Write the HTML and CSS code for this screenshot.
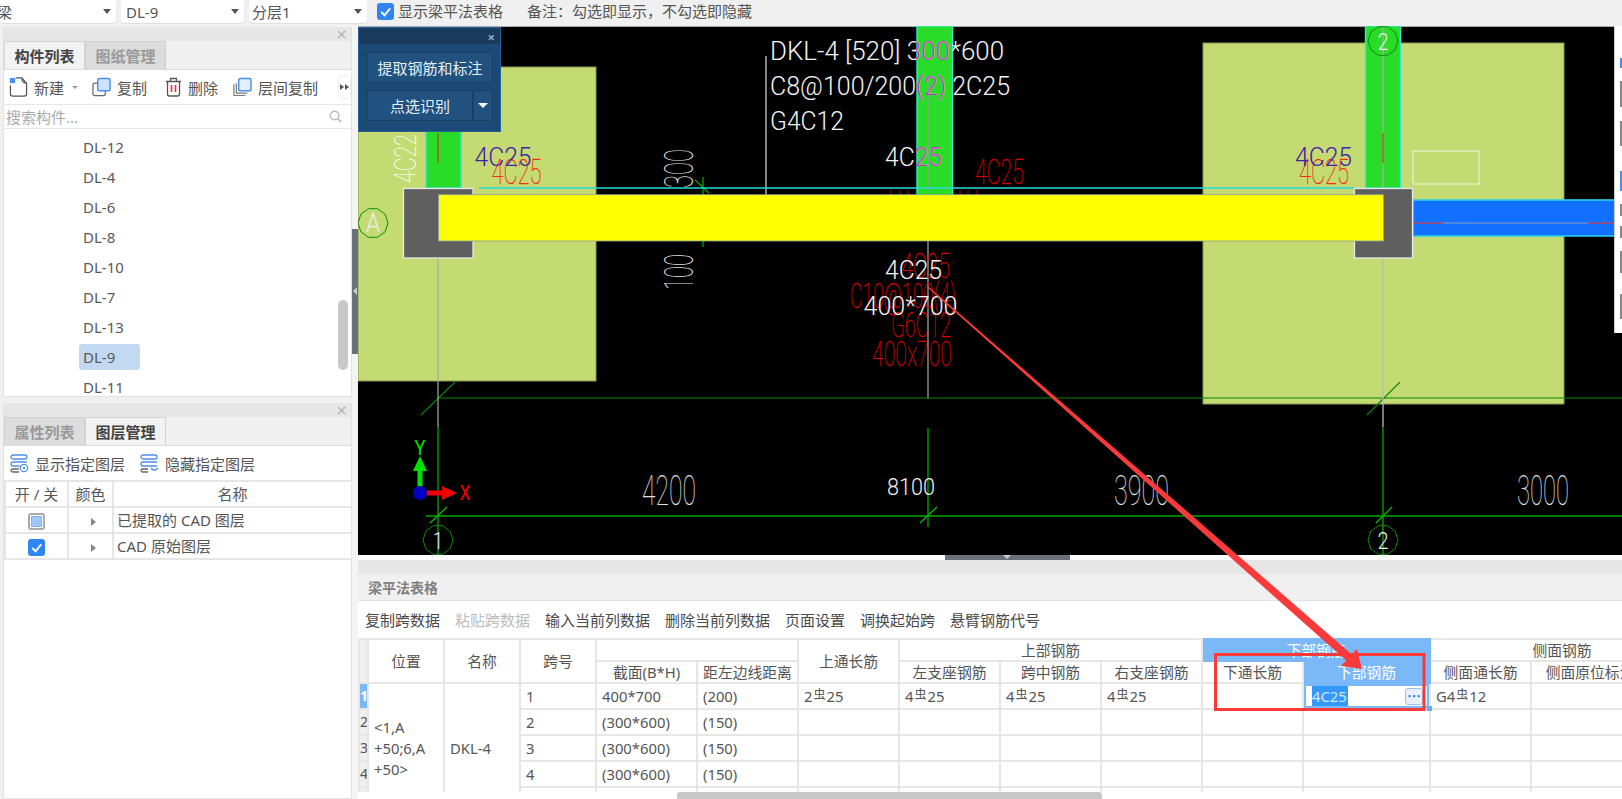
FILE: index.html
```html
<!DOCTYPE html>
<html lang="zh">
<head>
<meta charset="utf-8">
<title>梁平法表格</title>
<link rel="stylesheet" href="styles.css">
</head>
<body>
<header class="topbar">
  <div class="select s1"><span class="cut">梁</span><i class="caret"></i></div>
  <div class="select s2"><span>DL-9</span><i class="caret"></i></div>
  <div class="select s3"><span>分层1</span><i class="caret"></i></div>
  <span class="check on topcheck"><svg viewBox="0 0 16 16"><path d="M3.5 8.5 L7 12 L13 4.5" fill="none" stroke="#fff" stroke-width="2"/></svg></span>
  <span class="toplabel">显示梁平法表格</span>
  <span class="topnote">备注：勾选即显示，不勾选即隐藏</span>
</header>

<div class="main">
  <aside class="sidebar">
    <section class="panel p1">
      <div class="ptitle"><svg class="close" viewBox="0 0 10 10"><path d="M1 1 L9 9 M9 1 L1 9" stroke="#aaa" stroke-width="1.2"/></svg></div>
      <div class="tabs"><span class="tab active">构件列表</span><span class="tab">图纸管理</span></div>
      <div class="tools">
        <svg class="ic i-new" viewBox="0 0 20 21"><path d="M1.5 9 V17.5 Q1.5 20 4 20 H16 Q18.5 20 18.5 17.5 V6.5 L13.5 1 H7" fill="none" stroke="#555" stroke-width="1.3"/><path d="M13.5 1 Q13.5 6.5 18.5 6.5" fill="none" stroke="#555" stroke-width="1.2"/><rect x="1" y="1" width="5.5" height="5.5" fill="#4a90ec"/></svg>
        <span class="tl t-new">新建</span><i class="mini"></i>
        <svg class="ic i-copy" viewBox="0 0 20 20"><rect x="1" y="6" width="13" height="13" rx="2" fill="#fff" stroke="#666" stroke-width="1.3"/><rect x="6" y="1" width="13" height="13" rx="2" fill="#cfe2fb" stroke="#4a90e8" stroke-width="1.5"/></svg>
        <span class="tl t-copy">复制</span>
        <svg class="ic i-del" viewBox="0 0 17 20"><path d="M1 4.5 H16 M5.5 4.5 V1.5 H11.5 V4.5" fill="none" stroke="#555" stroke-width="1.3"/><path d="M2.5 4.5 V17 Q2.5 19 4.5 19 H12.5 Q14.5 19 14.5 17 V4.5" fill="none" stroke="#555" stroke-width="1.3"/><path d="M6.5 8 V15 M10.5 8 V15" stroke="#e03030" stroke-width="1.6"/></svg>
        <span class="tl t-del">删除</span>
        <svg class="ic i-floor" viewBox="0 0 20 20"><path d="M1 7 V19 H13 M3.5 6 V16.5 H15" fill="none" stroke="#777" stroke-width="1.2"/><rect x="6" y="1" width="13" height="13" rx="2" fill="#e3eefc" stroke="#4a90e8" stroke-width="1.5"/></svg>
        <span class="tl t-floor">层间复制</span>
        <span class="more"><i></i><i></i></span>
      </div>
      <div class="search"><span>搜索构件...</span><svg viewBox="0 0 14 14"><circle cx="6" cy="6" r="4.6" fill="none" stroke="#bbb" stroke-width="1.6"/><path d="M9.5 9.5 L13 13" stroke="#bbb" stroke-width="1.8"/></svg></div>
      <div class="listwrap">
        <ul class="list">
          <li><span>DL-12</span></li><li><span>DL-4</span></li><li><span>DL-6</span></li><li><span>DL-8</span></li><li><span>DL-10</span></li><li><span>DL-7</span></li><li><span>DL-13</span></li><li class="cur"><span>DL-9</span></li><li><span>DL-11</span></li>
        </ul>
        <div class="vscroll"></div>
      </div>
    </section>
    <section class="panel p2">
      <div class="ptitle"><svg class="close" viewBox="0 0 10 10"><path d="M1 1 L9 9 M9 1 L1 9" stroke="#aaa" stroke-width="1.2"/></svg></div>
      <div class="tabs"><span class="tab">属性列表</span><span class="tab active">图层管理</span></div>
      <div class="layerbar">
        <svg class="lic" viewBox="0 0 19 19"><rect x="1" y="1" width="16" height="4" rx="2" fill="none" stroke="#4a90e8" stroke-width="1.3"/><path d="M17 8 H3 Q1 8 1 10 Q1 12 3 12 H10" fill="none" stroke="#4a90e8" stroke-width="1.3"/><path d="M9 15 H3 Q1 15 1 16.5 Q1 18 3 18 H9" fill="none" stroke="#666" stroke-width="1.3"/><circle cx="14" cy="14" r="3.6" fill="none" stroke="#4a90e8" stroke-width="1.2"/><circle cx="14" cy="14" r="1.2" fill="#4a90e8"/></svg>
        <span class="ll">显示指定图层</span>
        <svg class="lic" viewBox="0 0 19 19"><rect x="1" y="1" width="16" height="4" rx="2" fill="none" stroke="#4a90e8" stroke-width="1.3"/><path d="M17 8 H3 Q1 8 1 10 Q1 12 3 12 H17" fill="none" stroke="#4a90e8" stroke-width="1.3"/><path d="M8 15 H3 Q1 15 1 16.5 Q1 18 3 18 H8" fill="none" stroke="#666" stroke-width="1.3"/><path d="M11 14 Q14 18 18 14" fill="none" stroke="#4a90e8" stroke-width="1.3"/></svg>
        <span class="ll">隐藏指定图层</span>
      </div>
      <table class="layers">
        <colgroup><col class="lc1"><col class="lc2"><col class="lc3"></colgroup>
        <tr><th>开 / 关</th><th>颜色</th><th>名称</th></tr>
        <tr><td class="mid"><span class="check part"><i></i></span></td><td class="arr"><i class="tri"></i></td><td>已提取的 CAD 图层</td></tr>
        <tr><td class="mid"><span class="check on"><svg viewBox="0 0 16 16"><path d="M3.5 8.5 L7 12 L13 4.5" fill="none" stroke="#fff" stroke-width="2"/></svg></span></td><td class="arr"><i class="tri"></i></td><td>CAD 原始图层</td></tr>
      </table>
    </section>
  </aside>
  <div class="splitter"><div class="handle"><i></i></div></div>

  <div class="work">
    <div class="canvas">
      <svg class="cad" viewBox="358 26 1264 529" width="1264" height="529">
        <defs>
          <clipPath id="gc"><rect x="916" y="26" width="36" height="170"/></clipPath>
          <polygon id="ring" points="15,0 12.1,8.8 4.6,14.3 -4.6,14.3 -12.1,8.8 -15,0 -12.1,-8.8 -4.6,-14.3 4.6,-14.3 12.1,-8.8" fill="none" stroke="#0c8c0c" stroke-width="1"/>
        </defs>
        <rect x="358" y="26" width="1264" height="529" fill="#000"/>
        <rect x="358" y="26" width="1264" height="1" fill="#aaa"/>
        <!-- columns -->
        <rect x="358" y="67" width="238" height="314" fill="#c3db72" stroke="#8a9a50"/>
        <rect x="1203" y="43" width="361" height="361" fill="#c3db72" stroke="#8a9a50"/>
        <!-- grid -->
        <path d="M438 398 H1622" stroke="#0a860a" stroke-width="1.2"/>
        <path d="M426 516 H1622" stroke="#00a800" stroke-width="1.4"/>
        <path d="M421 415 L455 382 M1367 415 L1400 382" stroke="#0a860a" stroke-width="1.1"/>
        <path d="M430 523 L447 507 M920 523 L937 507 M1376 523 L1392 507" stroke="#00c800" stroke-width="1.2"/>
        <path d="M438 427 V555 M928 428 V527 M1383 427 V555" stroke="#00a800" stroke-width="1.3"/>
        <path d="M438 258 V427 M928 241 V398" stroke="#aaa" stroke-width="1.2"/>
        <path d="M1383 258 V427" stroke="#bbb" stroke-width="1.3"/>
        <path d="M766 56 V195" stroke="#ccc" stroke-width="1.3"/>
        <path d="M703 177 V247 M695 180 L709 193" stroke="#00b000" stroke-width="1.2"/>
        <!-- green walls -->
        <rect x="426" y="128" width="35" height="60" fill="#28dc28" stroke="#30e8d8" stroke-width="1.4"/>
        <rect x="917" y="26" width="35.5" height="170" fill="#28dc28" stroke="#30e8d8" stroke-width="1.4"/>
        <rect x="1365.5" y="26" width="35" height="162" fill="#28dc28" stroke="#30e8d8" stroke-width="1.4"/>
        <path d="M928 75 V190" stroke="#999" stroke-width="1"/>
        <path d="M1383 26 V188" stroke="#aaa" stroke-width="1.2"/>
        <path d="M438 133 V163 M1383 133 V163" stroke="#c84018" stroke-width="1.2"/>
        <!-- beams -->
        <path d="M479 188 H1355" stroke="#28d8d8" stroke-width="1.3"/>
        <path d="M891 190 V195 M900 190 V195 M908 190 V195 M960 190 V195 M968 190 V195 M977 190 V195" stroke="#b00000" stroke-width="1"/>
        <rect x="1413" y="200" width="210" height="36" fill="#1170ff" stroke="#2cd0e8" stroke-width="1.6"/>
        <path d="M1413 223 H1622" stroke="#8a9ac0" stroke-width="1"/>
        <path d="M1413 223 H1443 M1588 223 H1622" stroke="#c02040" stroke-width="1.2"/>
        <rect x="403.5" y="188.5" width="69.5" height="69.5" fill="#5f5f5f" stroke="#e8e8e8" stroke-width="1.3"/>
        <rect x="1354.5" y="188.5" width="58" height="69.5" fill="#5f5f5f" stroke="#e8e8e8" stroke-width="1.3"/>
        <rect x="438.6" y="194.7" width="945" height="46.3" fill="#ff0" stroke="#8a9aa8" stroke-width=".8"/>
        <rect x="1413" y="151" width="66" height="33" fill="none" stroke="#e4eec0" stroke-width="1.4"/>
        <!-- dimension text -->
        <text class="thin w" x="642" y="505" font-size="42" textLength="54" lengthAdjust="spacingAndGlyphs">4200</text>
        <text class="thin w" x="1114" y="505" font-size="42" textLength="55" lengthAdjust="spacingAndGlyphs">3900</text>
        <text class="thin w" x="1517" y="505" font-size="42" textLength="52" lengthAdjust="spacingAndGlyphs">3000</text>
        <text class="lite wb" x="887" y="495" font-size="24" textLength="48" lengthAdjust="spacingAndGlyphs">8100</text>
        <text class="thin w" transform="translate(693 188) rotate(-90)" font-size="41" textLength="39" lengthAdjust="spacingAndGlyphs">300</text>
        <text class="thin w" transform="translate(693 290) rotate(-90)" font-size="41" textLength="36" lengthAdjust="spacingAndGlyphs">100</text>
        <text class="thin ww" transform="translate(416 183) rotate(-90)" font-size="32" textLength="49" lengthAdjust="spacingAndGlyphs">4C22</text>
        <!-- red rebar text -->
        <text class="thin r1" x="491.5" y="184" font-size="35" textLength="50" lengthAdjust="spacingAndGlyphs">4C25</text>
        <text class="thin r1" x="1299" y="184" font-size="35" textLength="50" lengthAdjust="spacingAndGlyphs">4C25</text>
        <text class="thin r2" x="975" y="184" font-size="35" textLength="49" lengthAdjust="spacingAndGlyphs">4C25</text>
        <text class="thin r2" x="901" y="278" font-size="35" textLength="49" lengthAdjust="spacingAndGlyphs">4C25</text>
        <text class="thin r2" x="850" y="308" font-size="35" textLength="106" lengthAdjust="spacingAndGlyphs">C10@100(4)</text>
        <text class="thin r2" x="891" y="337" font-size="35" textLength="60" lengthAdjust="spacingAndGlyphs">G6C12</text>
        <text class="thin r2" x="872" y="366" font-size="35" textLength="80" lengthAdjust="spacingAndGlyphs">400x700</text>
        <!-- purple -->
        <text class="lite p" x="474.5" y="166" font-size="26" textLength="57" lengthAdjust="spacingAndGlyphs">4C25</text>
        <text class="lite p" x="1295" y="166" font-size="26" textLength="57" lengthAdjust="spacingAndGlyphs">4C25</text>
        <!-- beam annotation -->
        <g class="ann">
          <text x="770" y="60" font-size="25" textLength="234" lengthAdjust="spacingAndGlyphs">DKL-4 [520] 300*600</text>
          <text x="770" y="95" font-size="25" textLength="240" lengthAdjust="spacingAndGlyphs">C8@100/200(2) 2C25</text>
          <text x="770" y="130" font-size="25" textLength="74" lengthAdjust="spacingAndGlyphs">G4C12</text>
          <text x="885" y="166" font-size="25" textLength="57" lengthAdjust="spacingAndGlyphs">4C25</text>
          <text x="885" y="279" font-size="25" textLength="57" lengthAdjust="spacingAndGlyphs">4C25</text>
          <text x="863.5" y="315" font-size="25" textLength="94" lengthAdjust="spacingAndGlyphs">400*700</text>
        </g>
        <g class="ann mag" clip-path="url(#gc)">
          <text x="770" y="60" font-size="25" textLength="234" lengthAdjust="spacingAndGlyphs">DKL-4 [520] 300*600</text>
          <text x="770" y="95" font-size="25" textLength="240" lengthAdjust="spacingAndGlyphs">C8@100/200(2) 2C25</text>
          <text x="885" y="166" font-size="25" textLength="57" lengthAdjust="spacingAndGlyphs">4C25</text>
        </g>
        <!-- axis bubbles -->
        <use href="#ring" x="373" y="223"/><use href="#ring" x="438" y="540"/><use href="#ring" x="1383" y="540"/><use href="#ring" x="1383" y="41"/>
        <text class="bub" x="373" y="232" font-size="25" textLength="14" lengthAdjust="spacingAndGlyphs">A</text>
        <text class="bub" x="438" y="549" font-size="24" textLength="10" lengthAdjust="spacingAndGlyphs">1</text>
        <text class="bub" x="1383" y="549" font-size="24" textLength="11" lengthAdjust="spacingAndGlyphs">2</text>
        <text class="bub" x="1383" y="50" font-size="24" textLength="11" lengthAdjust="spacingAndGlyphs">2</text>
        <!-- UCS -->
        <path d="M420 492 V470" stroke="#00e000" stroke-width="5"/>
        <polygon points="420,456 413,471 427,471" fill="#00e000"/>
        <path d="M424 493 H444" stroke="#f00000" stroke-width="5"/>
        <polygon points="457,493 442,486 442,500" fill="#f00000"/>
        <circle cx="420" cy="493" r="7" fill="#0000c0"/>
        <text class="axy gy" x="420" y="455" font-size="20" textLength="11" lengthAdjust="spacingAndGlyphs">Y</text>
        <text class="axy rx" x="465" y="500" font-size="20" textLength="11" lengthAdjust="spacingAndGlyphs">X</text>
      </svg>

      <div class="float">
        <div class="ftitle"><span>×</span></div>
        <div class="fbtn wide">提取钢筋和标注</div>
        <div class="frow"><div class="fbtn main2">点选识别</div><div class="fbtn drop"><i></i></div></div>
      </div>
      <div class="sidecut"><i class="b m1"></i><i class="g m2"></i><i class="g m3"></i><i class="b m4"></i><i class="g m5"></i><i class="g m6"></i><i class="g m7"></i><i class="g m8"></i></div>
    </div>
    <div class="gap"><div class="gaphandle"><i></i></div></div>
    <section class="bottom">
      <div class="btitle"></div>
      <div class="bhead">梁平法表格</div>
      <div class="btools">
        <span>复制跨数据</span><span class="off">粘贴跨数据</span><span>输入当前列数据</span><span>删除当前列数据</span><span>页面设置</span><span>调换起始跨</span><span>悬臂钢筋代号</span>
      </div>
      <div class="tablewrap">
        <table class="grid">
          <colgroup>
            <col class="c0"><col class="c1"><col class="c1"><col class="c1"><col class="c2"><col class="c2"><col class="c2"><col class="c2"><col class="c2"><col class="c2"><col class="c2"><col class="c3"><col class="c2"><col class="c5"><col class="c4">
          </colgroup>
          <tr class="h1">
            <th class="rh" rowspan="2"></th><th rowspan="2">位置</th><th rowspan="2">名称</th><th rowspan="2">跨号</th><th colspan="2"></th><th rowspan="2">上通长筋</th><th colspan="3">上部钢筋</th><th colspan="2" class="sel">下部钢筋</th><th colspan="3">侧面钢筋</th>
          </tr>
          <tr class="h2">
            <th>截面(B*H)</th><th>距左边线距离</th><th>左支座钢筋</th><th>跨中钢筋</th><th>右支座钢筋</th><th>下通长筋</th><th class="sel">下部钢筋</th><th>侧面通长筋</th><th>侧面原位标注</th><th></th>
          </tr>
          <tr>
            <td class="rh on">1</td>
            <td rowspan="5" class="pos">&lt;1,A<br>+50;6,A<br>+50&gt;</td><td rowspan="5">DKL-4</td>
            <td>1</td><td>400*700</td><td>(200)</td><td>2<span class="rb">虫</span>25</td><td>4<span class="rb">虫</span>25</td><td>4<span class="rb">虫</span>25</td><td>4<span class="rb">虫</span>25</td><td></td>
            <td class="edit"><div class="editor"><span class="picked">4C25</span><span class="dots">⋯</span></div><i class="fill"></i></td>
            <td>G4<span class="rb">虫</span>12</td><td></td><td></td>
          </tr>
          <tr><td class="rh">2</td><td>2</td><td>(300*600)</td><td>(150)</td><td></td><td></td><td></td><td></td><td></td><td></td><td></td><td></td><td></td></tr>
          <tr><td class="rh">3</td><td>3</td><td>(300*600)</td><td>(150)</td><td></td><td></td><td></td><td></td><td></td><td></td><td></td><td></td><td></td></tr>
          <tr><td class="rh">4</td><td>4</td><td>(300*600)</td><td>(150)</td><td></td><td></td><td></td><td></td><td></td><td></td><td></td><td></td><td></td></tr>
          <tr><td class="rh"></td><td></td><td></td><td></td><td></td><td></td><td></td><td></td><td></td><td></td><td></td><td></td><td></td></tr>
        </table>
      </div>
      <div class="hbar"><div class="thumb"></div></div>
    </section>
  </div>
</div>

<svg class="markup" viewBox="0 0 1622 799" width="1622" height="799">
  <polygon points="928.4,286.6 1351.8,654.4 1357,649 1362,669 1341,666 1346.2,660.6 927.6,287.4" fill="#f83a3a"/>
  <rect x="1215.5" y="654.5" width="208.5" height="55" fill="none" stroke="#f83a3a" stroke-width="3"/>
</svg>
</body>
</html>
```
FILE: styles.css
```css
* { box-sizing: border-box; }
html, body { margin: 0; padding: 0; }
body {
  position: relative;
  width: 1622px;
  height: 799px;
  overflow: hidden;
  background: #f0f0f0;
  color: #555;
  font-family: "Noto Sans", "Noto Sans CJK SC", sans-serif;
  font-size: 15px;
}

/* top bar */
.topbar { display: flex; align-items: flex-start; height: 26px; background: #f0f0f0; gap: 5px; }
.select {
  display: flex; align-items: center; justify-content: space-between;
  height: 23px; background: #fff; border-radius: 0 0 4px 4px;
  padding: 0 5px 0 5px; box-shadow: 0 1px 1px #ddd; color: #555;
}
.s1 { width: 116px; padding-left: 0; }
.s1 .cut { margin-left: -3px; }
.s2 { width: 123px; }
.s3 { width: 118px; padding-left: 3px; }
.caret { width: 0; height: 0; border: 4px solid transparent; border-top: 5px solid #555; border-bottom: 0; }
.check { display: inline-flex; align-items: center; justify-content: center; width: 17px; height: 17px; border-radius: 3px; }
.check svg { width: 15px; height: 15px; }
.check.on { background: #2f86f0; }
.check.part { background: #fff; border: 2px solid #aaa; }
.check.part i { width: 11px; height: 11px; background: #9cc8fb; border: 1px solid #7eb2f0; }
.topcheck { margin: 3px 0 0 5px; }
.toplabel { margin-left: -1px; line-height: 22px; }
.topnote { margin-left: 19px; line-height: 22px; }

/* layout */
.main { display: flex; height: 773px; }
.sidebar { display: flex; flex-direction: column; width: 352px; padding: 1px 0 0 3px; gap: 6px; background: #f0f0f0; }
.splitter { width: 6px; background: #f4f4f4; }
.handle { position: relative; width: 6px; height: 125px; margin-top: 203px; background: #6b7178; }
.handle i { position: absolute; left: 1px; top: 58px; border: 4px solid transparent; border-right: 4px solid #c8ccd0; border-left: 0; }
.work { display: flex; flex-direction: column; width: 1264px; }

/* panels */
.panel { display: flex; flex-direction: column; width: 349px; background: #fff; border: 1px solid #e2e2e2; border-top: 0; }
.p1 { height: 370px; }
.p2 { flex: 1; }
.ptitle { position: relative; height: 14px; background: #e6e6e6; flex: none; }
.close { position: absolute; right: 5px; top: 3px; width: 9px; height: 9px; }
.tabs { display: flex; height: 29px; background: #f0f0f0; border-bottom: 1px solid #ddd; flex: none; }
.tab { width: 81px; text-align: center; line-height: 28px; font-weight: 700; color: #999; background: #dcdcdc; border: 1px solid #cfcfcf; border-bottom: 0; }
.tab.active { color: #444; background: #f2f2f2; border-color: #d4d4d4; }
.tools { display: flex; align-items: center; height: 35px; padding-left: 5px; border-bottom: 1px solid #e6e6e6; flex: none; }
.ic { flex: none; width: 19px; height: 20px; }
.tl { flex: none; }
.t-new { margin-left: 6px; }
.mini { margin-left: 8px; width: 0; height: 0; border: 3px solid transparent; border-top: 3px solid #999; border-bottom: 0; }
.i-copy { margin-left: 14px; }
.t-copy { margin-left: 6px; }
.i-del { margin-left: 18px; width: 17px; }
.t-del { margin-left: 6px; }
.i-floor { margin-left: 15px; }
.t-floor { margin-left: 6px; }
.more { display: flex; align-items: center; justify-content: center; gap: 1px; width: 13px; height: 24px; margin-left: 20px; background: #fff; border: 1px solid #eee; border-radius: 4px; }
.more i { border: 3px solid transparent; border-left: 4px solid #555; border-right: 0; }
.search { display: flex; align-items: center; justify-content: space-between; height: 24px; padding: 0 9px 0 2px; color: #aaa; border-bottom: 1px solid #e6e6e6; flex: none; }
.search svg { width: 13px; height: 13px; }
.listwrap { position: relative; flex: 1; overflow: hidden; }
.list { list-style: none; margin: 0; padding: 3px 0 0 75px; }
.list li { height: 30px; display: flex; align-items: center; }
.list span { display: block; width: 61px; height: 26px; line-height: 26px; padding-left: 4px; border-radius: 3px; color: #5a5a5a; }
.list .cur span { background: #c2d9f1; }
.vscroll { position: absolute; left: 334px; top: 171px; width: 10px; height: 70px; background: #c8c8c8; border-radius: 5px; }

.layerbar { display: flex; align-items: center; height: 34px; padding-left: 6px; flex: none; }
.lic { width: 19px; height: 19px; flex: none; }
.ll { margin-left: 6px; margin-right: 15px; }
.layers { border-collapse: collapse; table-layout: fixed; width: 347px; margin-left: 0; }
.lc1 { width: 63px; } .lc2 { width: 45px; } .lc3 { width: 239px; }
.layers th, .layers td { height: 26px; border: 2px solid #e6e6e6; padding: 0 0 0 3px; font-weight: 400; font-size: 15px; line-height: 22px; color: #555; }
.layers th { padding: 0; text-align: center; }
.layers .mid { padding: 0; text-align: center; }
.layers .mid .check { vertical-align: middle; }
.layers .arr { padding: 0; text-align: center; }
.tri { display: inline-block; margin-left: 6px; border: 4px solid transparent; border-left: 5px solid #888; border-right: 0; vertical-align: middle; }

/* canvas */
.canvas { position: relative; height: 529px; flex: none; overflow: hidden; background: #000; }
.cad { display: block; }
.cad text { font-family: "Roboto", "Liberation Sans", sans-serif; }
.thin { font-weight: 100; }
.lite { font-weight: 300; }
.w { fill: #e0e0e0; }
.wb { fill: #f0f0f0; }
.ww { fill: #fff; }
.r1 { fill: #f03010; stroke: #f03010; stroke-width: .3; }
.r2 { fill: #d80000; stroke: #d80000; stroke-width: .3; }
.p { fill: #4520a8; }
.ann text { fill: #f4f4f4; font-weight: 300; }
.ann.mag text { fill: #c832c0; }
.bub { fill: #eee; text-anchor: middle; font-weight: 300; }
.axy { text-anchor: middle; }
.gy { fill: #00e000; }
.rx { fill: #f00000; }

.float { position: absolute; left: 0; top: 1px; width: 143px; height: 105px; background: #1c4a78; border: 1px solid #2a6098; }
.ftitle { display: flex; justify-content: flex-end; height: 16px; padding-right: 5px; background: #1a3a5c; color: #8fb0d4; font-weight: 700; font-size: 13px; line-height: 18px; }
.fbtn { display: flex; align-items: center; justify-content: center; height: 31px; background: #20517f; border: 1px solid #1a4066; color: #e6eef6; font-size: 15px; }
.wide { margin: 8px 7px 0 8px; }
.frow { display: flex; margin: 7px 7px 0 8px; }
.main2 { flex: 1; }
.drop { width: 20px; }
.drop i { border: 5px solid transparent; border-top: 5px solid #fff; border-bottom: 0; }
.sidecut { position: absolute; right: 0; top: 0; width: 8px; height: 307px; background: #fff; border-left: 1px solid #ccc; }
.sidecut i { position: absolute; right: 0; width: 2px; }
.sidecut .b { background: #4a90e8; }
.sidecut .g { background: #888; }
.m1 { top: 32px; height: 10px; } .m2 { top: 55px; height: 26px; } .m3 { top: 95px; height: 25px; }
.m4 { top: 145px; height: 20px; } .m5 { top: 178px; height: 12px; } .m6 { top: 200px; height: 12px; }
.m7 { top: 225px; height: 22px; } .m8 { top: 268px; height: 25px; }

.gap { height: 5px; background: #fff; flex: none; }
.gaphandle { position: relative; width: 125px; height: 5px; margin-left: 587px; background: #6b7178; }
.gaphandle i { position: absolute; left: 58px; top: 0; border: 4px solid transparent; border-top: 4px solid #c8ccd0; border-bottom: 0; }

/* bottom */
.bottom { display: flex; flex-direction: column; flex: 1; min-height: 0; background: #fff; }
.btitle { height: 14px; background: #e6e6e6; flex: none; }
.bhead { height: 27px; line-height: 28px; padding-left: 10px; font-size: 14px; font-weight: 700; color: #808080; background: #f0f0f0; border-bottom: 1px solid #e2e2e2; flex: none; }
.btools { display: flex; align-items: center; gap: 15px; height: 37px; padding-left: 7px; color: #4a4a4a; flex: none; }
.btools .off { color: #bbb; }
.tablewrap { height: 154px; overflow: hidden; flex: none; }
.grid { border-collapse: collapse; table-layout: fixed; width: 1335px; font-size: 14.8px; }
.c0 { width: 9px; } .c1 { width: 76px; } .c2 { width: 101px; } .c3 { width: 127px; } .c4 { width: 45px; } .c5 { width: 118px; }
.grid th, .grid td { border: 2px solid #e6e6e6; padding: 0 0 0 5px; height: 26px; line-height: 20px; color: #555; font-weight: 400; white-space: nowrap; overflow: hidden; }
.grid th { padding: 0; text-align: center; }
.grid .h1 th { height: 21px; }
.grid .h2 th { height: 20px; }
.grid .sel { background: #7ab8f8; color: #fff; border-color: #7ab8f8; }
.grid .rh { padding: 0; background: #efefef; text-align: center; font-size: 14px; }
.grid .rh.on { background: #7db8f5; color: #fff; font-weight: 700; }
.grid .pos { white-space: normal; line-height: 21px; }
.rb { font-size: 12px; margin: 0 1px; vertical-align: 3px; line-height: 1; }
.grid .edit { position: relative; padding: 0; overflow: visible; }
.editor { display: flex; align-items: center; justify-content: space-between; height: 24px; padding: 0 4px 0 6px; border: 2px solid #7ab8f8; background: #fff; }
.picked { background: #3399ff; color: #cfe6ff; line-height: 20px; padding-right: 1px; }
.dots { display: flex; align-items: center; justify-content: center; width: 18px; height: 17px; background: #e8f0fc; border: 1px solid #9cc0ee; border-radius: 3px; color: #3a7fe0; font-weight: 700; font-size: 14px; }
.fill { position: absolute; right: -3px; bottom: -3px; width: 5px; height: 5px; background: #6ea8ec; }
.hbar { height: 7px; flex: none; background: #fff; padding-left: 319px; }
.thumb { width: 425px; height: 7px; background: #c8c8c8; border-radius: 3px 3px 0 0; }

.markup { position: absolute; left: 0; top: 0; pointer-events: none; }
```
